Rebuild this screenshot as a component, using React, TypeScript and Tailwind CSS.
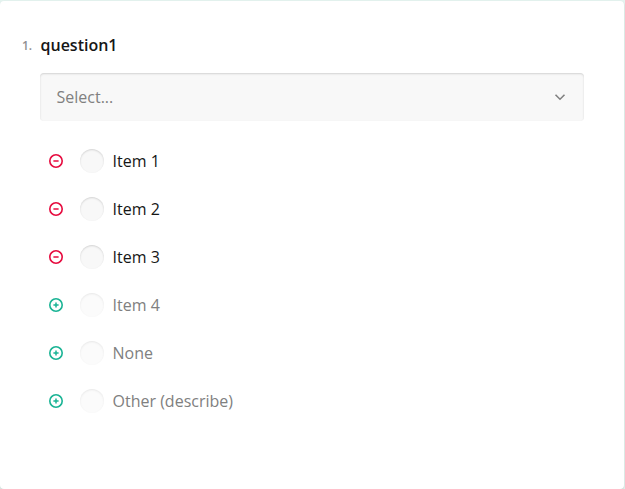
import React from "react";

const items = [
  { label: "Item 1", active: true },
  { label: "Item 2", active: true },
  { label: "Item 3", active: true },
  { label: "Item 4", active: false },
  { label: "None", active: false },
  { label: "Other (describe)", active: false },
];

function ToggleIcon({ remove }: { remove: boolean }) {
  return (
    <svg
      width="16"
      height="16"
      viewBox="0 0 16 16"
      fill="none"
      stroke={remove ? "#e60a3e" : "#19b394"}
      className="shrink-0"
    >
      <circle cx="8" cy="8" r="6.2" strokeWidth="1.6" />
      <path d="M5.4 8h5.2" strokeWidth="1.5" />
      {!remove && <path d="M8 5.4v5.2" strokeWidth="1.5" />}
    </svg>
  );
}

export default function App() {
  return (
    <div className="h-[489px] w-[625px] bg-[#e4f3ef] pt-px pr-px font-['Open_Sans',sans-serif]">
      <main className="h-[488px] rounded-[4px] bg-white pt-8 pl-[22px] pr-10 shadow-[0_1px_2px_rgba(0,0,0,0.15)]">
        <header className="flex h-6 items-center">
          <span className="w-[18.5px] pt-px text-[12px] font-semibold leading-4 text-[#909090]">1.</span>
          <h1 className="text-[16px] font-semibold leading-6 text-[#161616]">question1</h1>
        </header>
        <div className="mt-4 ml-[18px] flex h-12 items-center justify-between rounded-[4px] bg-[#f8f8f8] pr-4 pl-[16.5px] shadow-[inset_0_1px_2px_rgba(0,0,0,0.15)]">
          <span className="text-[16px] leading-6 text-[#808080]">Select...</span>
          <svg width="16" height="16" viewBox="0 0 16 16" fill="none" stroke="#808080" strokeWidth="1.6">
            <path d="M3.5 5.8 8 10.2l4.5-4.4" />
          </svg>
        </div>
        <ul className="mt-4 ml-[18px]">
          {items.map(({ label, active }) => (
            <li key={label} className="flex h-12 items-center pl-2">
              <ToggleIcon remove={active} />
              <div className="flex items-center gap-[8.5px] pl-4">
                <span className={`size-6 rounded-full bg-[#f8f8f8] shadow-[inset_0_1px_2px_rgba(0,0,0,0.15)] ${active ? "" : "opacity-50"}`} />
                <span className={`text-[16px] leading-6 ${active ? "text-[#161616]" : "text-[#808080]"}`}>{label}</span>
              </div>
            </li>
          ))}
        </ul>
      </main>
    </div>
  );
}
